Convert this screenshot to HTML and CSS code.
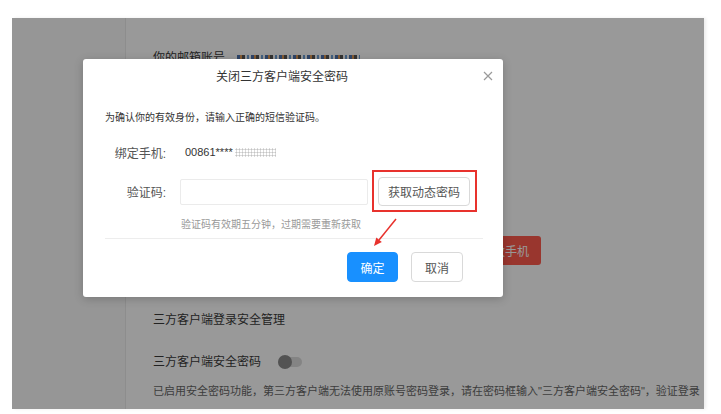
FILE: index.html
```html
<!DOCTYPE html>
<html lang="zh-CN">
<head>
  <meta charset="UTF-8">
  <meta name="viewport" content="width=device-width, initial-scale=1.0">
  <title>关闭三方客户端安全密码</title>
  <link rel="stylesheet" href="styles.css">
</head>
<body>
  <div class="screen">
    <aside class="sidebar"></aside>

    <main class="content">
      <div class="email-row">
        <span class="email-label">你的邮箱账号</span>
        <span class="mosaic-email"></span>
      </div>
      <button class="btn-danger">修改手机</button>
      <h3 class="section-title">三方客户端登录安全管理</h3>
      <div class="switch-row">
        <span>三方客户端安全密码</span>
        <span class="switch"><span class="switch-knob"></span></span>
      </div>
      <p class="desc">已启用安全密码功能，第三方客户端无法使用原账号密码登录，请在密码框输入"三方客户端安全密码"，验证登录</p>
    </main>

    <div class="mask"></div>

    <div class="dialog">
      <div class="dialog-header">
        关闭三方客户端安全密码
        <span class="dialog-close">
          <svg width="10" height="10" viewBox="0 0 10 10"><path d="M1 1L9 9M9 1L1 9" stroke="#9a9a9a" stroke-width="1.2" fill="none"/></svg>
        </span>
      </div>

      <div class="dialog-body">
        <p class="tip">为确认你的有效身份，请输入正确的短信验证码。</p>

        <div class="form-row">
          <label class="form-label">绑定手机:</label>
          <span class="phone">00861****<span class="mosaic-phone"></span></span>
        </div>

        <div class="form-row code-row">
          <label class="form-label">验证码:</label>
          <input class="code-input" type="text">
          <span class="code-mark">
            <button class="btn-code">获取动态密码</button>
          </span>
        </div>

        <p class="hint">验证码有效期五分钟，过期需要重新获取</p>

        <div class="dialog-footer">
          <button class="btn btn-primary">确定</button>
          <button class="btn">取消</button>
        </div>
      </div>

      <svg class="arrow" width="35" height="40" viewBox="0 0 35 40">
        <line x1="28" y1="5" x2="11" y2="26" stroke="#e8322d" stroke-width="1.5"/>
        <polygon points="6,32 13.8,28 8.3,23.6" fill="#e8322d"/>
      </svg>
    </div>
  </div>
</body>
</html>
```

FILE: styles.css
```css
:root {
  --text-main: #333;
  --text-label: #555;
  --text-light: #999;
  --border: #e3e3e3;
  --primary: #1890ff;
  --danger: #ff5a4d;
  --mark: #e8322d;
}

* {
  box-sizing: border-box;
  margin: 0;
  padding: 0;
}

body {
  font-family: "Liberation Sans", "Noto Sans CJK SC", sans-serif;
  background-color: #fff;
  color: var(--text-main);
  width: 721px;
  height: 414px;
  overflow: hidden;
}

button,
input {
  font-family: inherit;
}

.screen {
  position: relative;
  display: flex;
  margin: 18px 0 0 12px;
  width: 692px;
  height: 391px;
  overflow: hidden;
  background-color: #fff;
  box-shadow: 2px 0 3px rgba(0, 0, 0, 0.08);
}

.sidebar {
  width: 114px;
  flex-shrink: 0;
  background-color: #fbfbfb;
  border-right: 1px solid #ececec;
}

.content {
  flex: 1;
  padding: 30px 0 0 27px;
  font-size: 12px;
  color: #3a3a3a;
  min-width: 0;
}

.email-row {
  display: flex;
  align-items: center;
  height: 20px;
  line-height: 20px;
}

.mosaic-email {
  display: inline-block;
  width: 123px;
  height: 7px;
  margin-left: 12px;
  background-image: repeating-linear-gradient(90deg, #4d74b0 0 3px, #e09a55 3px 5px, #555 5px 8px, transparent 8px 10px, #6fa0d8 10px 12px, transparent 12px 14px);
}

.btn-danger {
  display: block;
  margin: 168px 0 0 316px;
  width: 72px;
  height: 29px;
  border: none;
  border-radius: 3px;
  background-color: var(--danger);
  color: #fff;
  font-size: 12px;
}

.section-title {
  margin-top: 45px;
  height: 20px;
  line-height: 20px;
  font-size: 12px;
  font-weight: normal;
}

.switch-row {
  display: flex;
  align-items: center;
  margin-top: 22px;
  height: 20px;
  line-height: 20px;
}

.switch {
  position: relative;
  display: inline-block;
  width: 24px;
  height: 10px;
  margin-left: 17px;
  border-radius: 5px;
  background-color: #dcdcdc;
}

.switch-knob {
  position: absolute;
  left: 0;
  top: -2px;
  width: 14px;
  height: 14px;
  border-radius: 50%;
  background-color: #8a8a8a;
}

.desc {
  margin-top: 10px;
  height: 18px;
  line-height: 18px;
  font-size: 11px;
  color: #666;
  white-space: nowrap;
}

.mask {
  position: absolute;
  inset: 0;
  background-color: rgba(0, 0, 0, 0.4);
}

.dialog {
  position: absolute;
  left: 71px;
  top: 41px;
  width: 420px;
  height: 238px;
  background-color: #fff;
  border-radius: 3px;
  box-shadow: 0 2px 10px rgba(0, 0, 0, 0.2);
}

.dialog-header {
  position: relative;
  height: 36px;
  line-height: 36px;
  padding: 0 32px 0 10px;
  text-align: center;
  font-size: 12px;
  color: var(--text-main);
}

.dialog-close {
  position: absolute;
  right: 10px;
  top: 12px;
  width: 10px;
  height: 10px;
  line-height: 0;
}

.dialog-body {
  padding: 0 20px 0 22px;
}

.tip {
  margin-top: 15px;
  height: 16px;
  line-height: 16px;
  font-size: 10px;
  color: var(--text-main);
}

.form-row {
  display: flex;
  align-items: center;
  margin-top: 16px;
  height: 20px;
}

.form-label {
  width: 61px;
  text-align: right;
  font-size: 12px;
  color: var(--text-label);
}

.phone {
  display: flex;
  align-items: center;
  margin-left: 19px;
  font-size: 11px;
  color: var(--text-main);
}

.mosaic-phone {
  display: inline-block;
  width: 41px;
  height: 9px;
  margin-left: 2px;
  background-image: radial-gradient(#b4b4b4 0.8px, transparent 1.3px);
  background-size: 3px 3px;
  opacity: 0.8;
}

.code-row {
  margin-top: 15px;
  height: 29px;
}

.code-input {
  width: 188px;
  height: 26px;
  margin-left: 14px;
  border: 1px solid #ebebeb;
  border-radius: 2px;
  outline: none;
}

/* red annotation box round the button */
.code-mark {
  position: relative;
  display: flex;
  margin-left: 10px;
}

.code-mark::after {
  content: "";
  position: absolute;
  inset: -7px -7px -6px -6px;
  border: 2px solid var(--mark);
}

.btn-code {
  width: 92px;
  height: 29px;
  border: 1px solid #d9d9d9;
  border-radius: 4px;
  background-color: #fff;
  color: var(--text-label);
  font-size: 12px;
}

.hint {
  margin: 11px 0 0 76px;
  height: 16px;
  line-height: 16px;
  font-size: 10px;
  color: var(--text-light);
}

.dialog-footer {
  display: flex;
  justify-content: flex-end;
  gap: 13px;
  margin-top: 5px;
  padding: 13px 20px 0 0;
  border-top: 1px solid #ededed;
}

.btn {
  width: 52px;
  height: 30px;
  border: 1px solid #d9d9d9;
  border-radius: 4px;
  background-color: #fff;
  color: var(--text-label);
  font-size: 12px;
}

.btn-primary {
  width: 51px;
  border-color: var(--primary);
  background-color: var(--primary);
  color: #fff;
}

.arrow {
  position: absolute;
  left: 285px;
  top: 155px;
}
```
